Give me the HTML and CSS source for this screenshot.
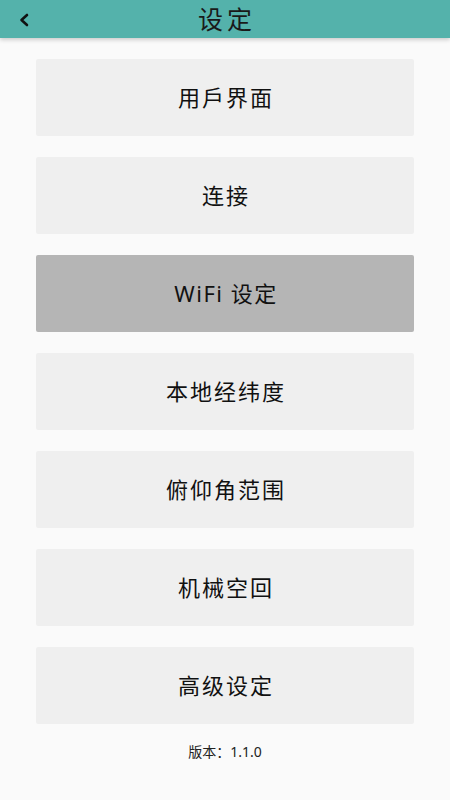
FILE: index.html
```html
<!DOCTYPE html>
<html lang="zh">
<head>
<meta charset="utf-8">
<link rel="stylesheet" href="styles.css">
</head>
<body>
<header class="topbar">
  <button class="back" aria-label="返回">
    <svg width="12" height="14" viewBox="0 0 12 14"><polyline points="9,2 3.5,7 9,12" fill="none" stroke="#111" stroke-width="2.6" stroke-linecap="round" stroke-linejoin="round"/></svg>
  </button>
  <h1 class="title">设定</h1>
</header>
<main class="menu">
  <div class="item">用戶界面</div>
  <div class="item">连接</div>
  <div class="item active">WiFi 设定</div>
  <div class="item">本地经纬度</div>
  <div class="item">俯仰角范围</div>
  <div class="item">机械空回</div>
  <div class="item">高级设定</div>
</main>
<footer class="version">版本：1.1.0</footer>
</body>
</html>
```

FILE: styles.css
```css
html, body {
  margin: 0;
  padding: 0;
  background: #fafafa;
  font-family: "Noto Sans", "Noto Sans CJK SC", sans-serif;
  color: #111;
}
.topbar {
  height: 38px;
  background: #54b2ab;
  display: flex;
  align-items: center;
  justify-content: center;
  position: relative;
  box-shadow: 0 2px 4px rgba(0,0,0,0.18);
}
.back {
  position: absolute;
  left: 18px;
  top: 13px;
  border: 0;
  background: none;
  padding: 0;
  width: 14px;
  height: 14px;
  display: flex;
}
.title {
  margin: 0;
  font-size: 25px;
  font-weight: 400;
  letter-spacing: 4px;
  padding-left: 4px;
  line-height: 38px;
  color: #1a1a1a;
}
.menu {
  display: flex;
  flex-direction: column;
  gap: 21px;
  padding: 21px 36px 0;
}
.item {
  height: 77px;
  box-sizing: border-box;
  padding: 0 0 3px 2px;
  background: #efefef;
  border-radius: 2px;
  display: flex;
  align-items: center;
  justify-content: center;
  font-size: 22px;
  font-weight: 400;
  letter-spacing: 2px;
  color: #111;
}
.item.active {
  background: #b5b5b5;
  letter-spacing: 1.5px;
}
.version {
  text-align: center;
  font-size: 14px;
  margin-top: 17px;
  color: #222;
}
```
